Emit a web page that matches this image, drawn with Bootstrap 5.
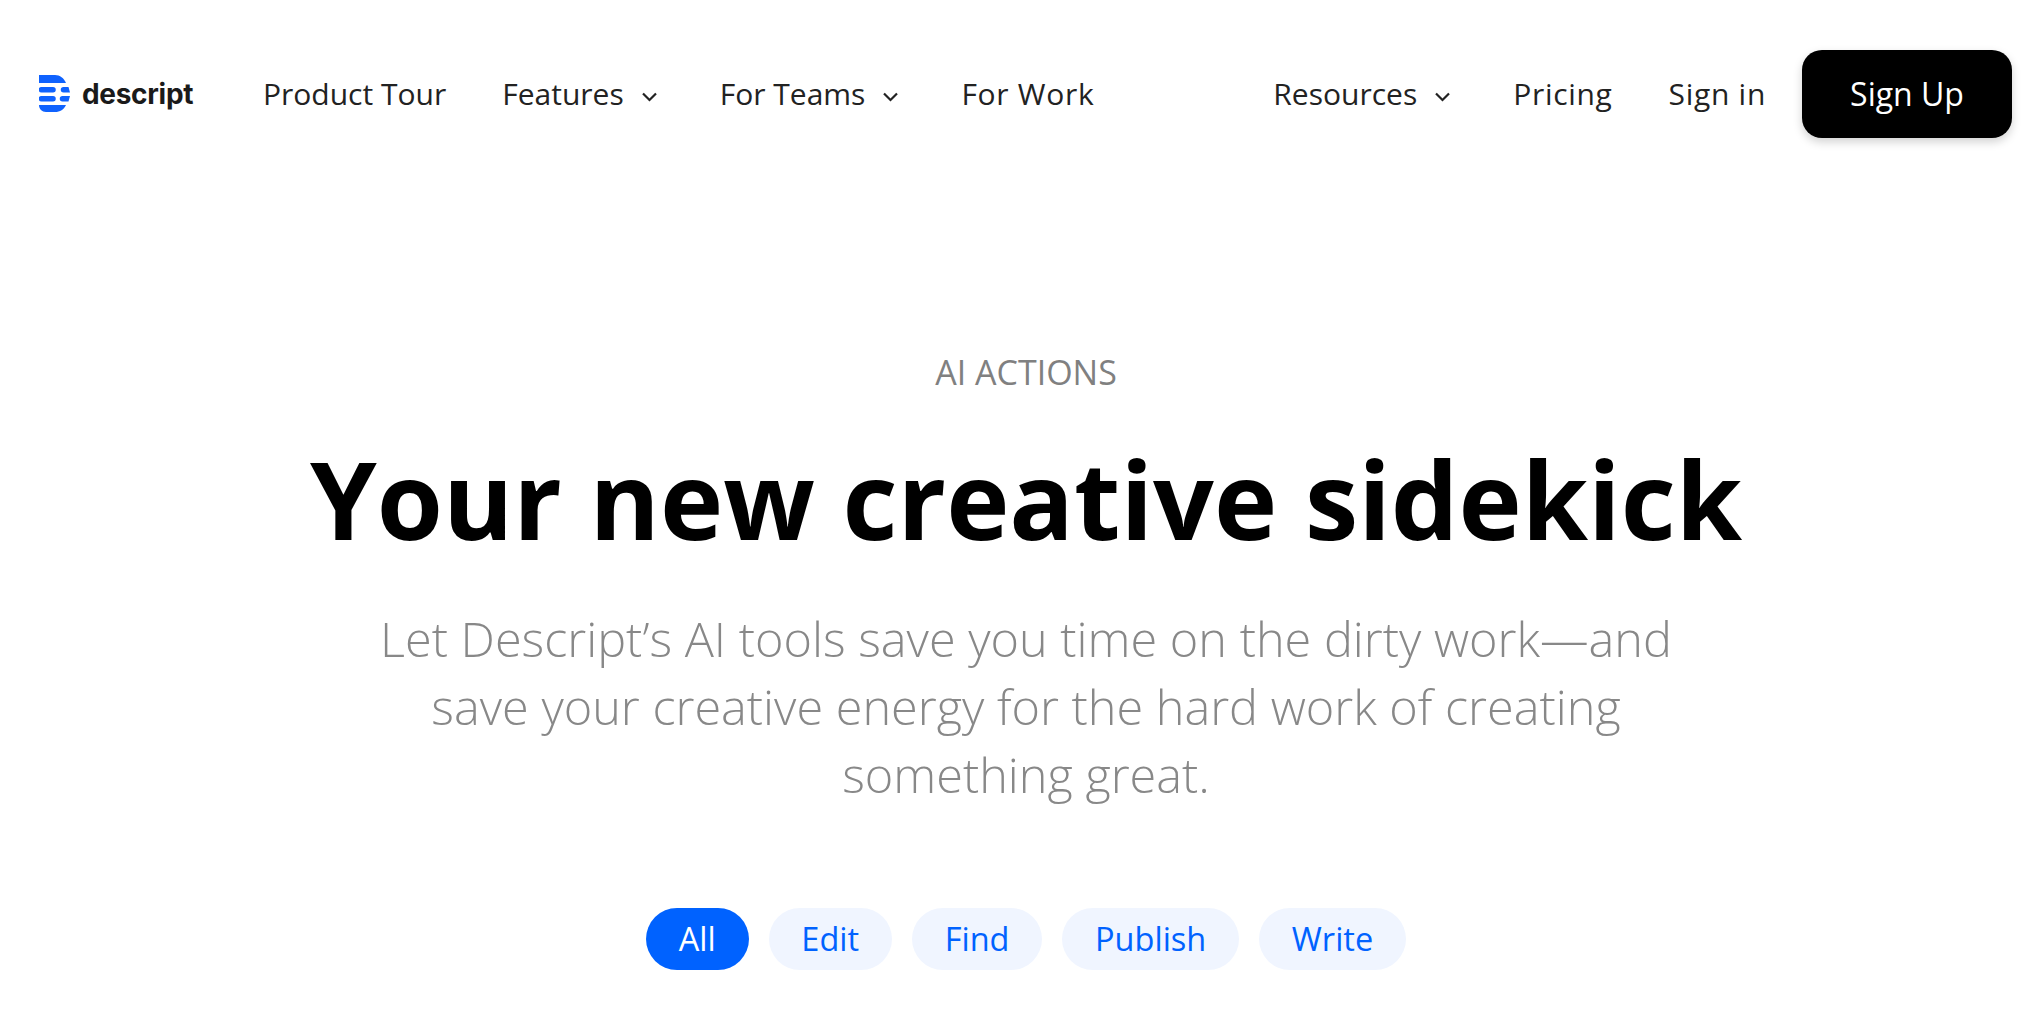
<!doctype html>
<html lang="en"><head><meta charset="utf-8"><title>Descript AI Actions</title>
<link href="https://cdn.jsdelivr.net/npm/bootstrap@5.3.0/dist/css/bootstrap.min.css" rel="stylesheet">
<style>
body{font-family:"Open Sans","Noto Sans",sans-serif;background:#fff;color:#000;overflow:hidden}
.topbar{height:187px;padding:0 19px 0 39px}
.logo-box{width:224px;gap:12px;color:#1a1a1a;text-decoration:none}
.logo-word{font-family:Inter,sans-serif;font-weight:700;font-size:28px;letter-spacing:-.3px}
.top-link{font-size:30px;color:#222;text-decoration:none;line-height:40px;white-space:nowrap}
.top-wide{letter-spacing:.7px}
.left-links,.right-links{gap:56px}
.top-link svg{margin-left:17px;margin-right:6px;vertical-align:3px}
.signup{background:#000;color:#fff;font-size:32px;width:210px;height:88px;border-radius:20px;border:0;box-shadow:0 4px 10px rgba(0,0,0,.18);margin-left:-20px}
.eyebrow{font-size:34px;color:#808080;margin-top:163px;line-height:44px}
.page-main{padding-left:21px}
.headline{font-size:107px;font-weight:700;line-height:140px;margin:35px 0 0;color:#000}
.subline{font-weight:300;font-size:48.600px;line-height:68px;color:#888;width:1360px;margin:35px auto 0}
.pills{gap:20px;margin-top:100px}
.pill{height:62px;border-radius:31px;padding:0 32.800px;font-size:32.500px;line-height:62px;background:#f0f5ff;color:#0062ff;text-decoration:none}
.pill-on{background:#0062ff;color:#fff}
</style></head><body>
<nav class="topbar d-flex align-items-center">
<a class="logo-box d-flex align-items-center" href="#">
<svg width="31" height="37" viewBox="0 0 31 37"><path fill="#0f62fe" d="M0 0h16c5 0 9 3 11 8H0zM2.500 12H14a2.700 2.700 0 0 1 0 5.500H2.500a2.700 2.700 0 0 1 0-5.500zM24.500 12h5l1.500 5.500h-6.500a2.700 2.700 0 0 1 0-5.500zM2.500 21H14a2.700 2.700 0 0 1 0 5.500H2.500a2.700 2.700 0 0 1 0-5.500zM23.500 21H31l-1.500 5.500h-6a2.700 2.700 0 0 1 0-5.500zM0 30h27c-2 4.500-6 7-11 7H7c-4 0-7-3-7-7z"/></svg>
<span class="logo-word">descript</span></a>
<div class="left-links d-flex align-items-center">
<a class="top-link" href="#">Product Tour</a>
<a class="top-link" href="#">Features<svg width="17" height="10" viewBox="0 0 16 10"><path d="M1.500 1.500 8 8l6.500-6.500" fill="none" stroke="#222" stroke-width="2.200"/></svg></a>
<a class="top-link" href="#">For Teams<svg width="17" height="10" viewBox="0 0 16 10"><path d="M1.500 1.500 8 8l6.500-6.500" fill="none" stroke="#222" stroke-width="2.200"/></svg></a>
<a class="top-link top-wide" href="#">For Work</a>
</div>
<div class="right-links d-flex align-items-center ms-auto">
<a class="top-link" href="#">Resources<svg width="17" height="10" viewBox="0 0 16 10"><path d="M1.500 1.500 8 8l6.500-6.500" fill="none" stroke="#222" stroke-width="2.200"/></svg></a>
<a class="top-link top-wide" href="#">Pricing</a>
<a class="top-link top-wide" href="#">Sign in</a>
<button class="signup btn">Sign Up</button>
</div>
</nav>
<main class="page-main text-center">
<div class="eyebrow">AI ACTIONS</div>
<h1 class="headline">Your new creative sidekick</h1>
<p class="subline">Let Descript’s AI tools save you time on the dirty work—and save your creative energy for the hard work of creating something great.</p>
<div class="pills d-flex justify-content-center">
<a class="pill pill-on" href="#">All</a><a class="pill" href="#">Edit</a><a class="pill" href="#">Find</a><a class="pill" href="#">Publish</a><a class="pill" href="#">Write</a>
</div>
</main>
<script src="https://cdn.jsdelivr.net/npm/bootstrap@5.3.0/dist/js/bootstrap.bundle.min.js"></script>
</body></html>
